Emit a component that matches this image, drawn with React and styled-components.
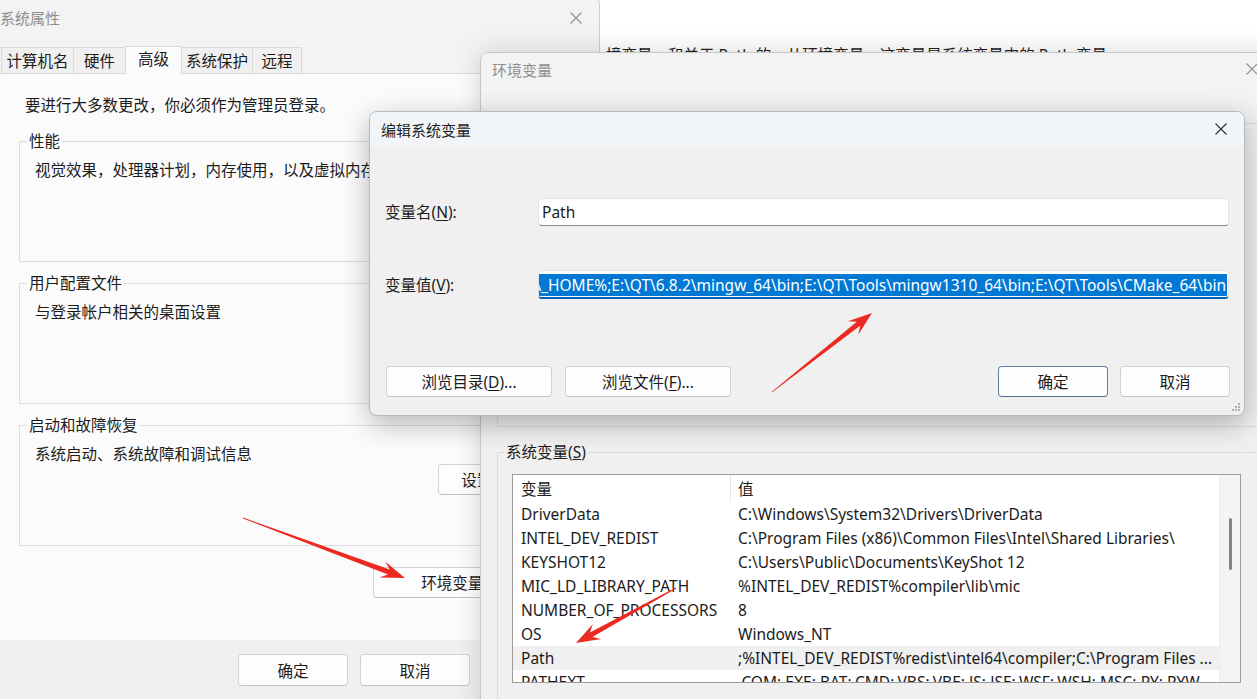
import React from 'react'
import styled, { createGlobalStyle } from 'styled-components'

const GlobalStyle = createGlobalStyle`
  html, body { margin: 0; padding: 0; }
  body {
    font-family: "Noto Sans", "Noto Sans CJK SC", sans-serif;
    font-size: 15.5px;
    color: #1b1b1b;
  }
  * { box-sizing: border-box; }
`

const Desktop = styled.div`
  position: relative;
  width: 1257px;
  height: 699px;
  overflow: hidden;
  background: #ffffff;
`

/* page behind the dialogs, top right */
const BackPage = styled.div`
  position: absolute;
  left: 600px;
  top: 0;
  width: 657px;
  height: 60px;
  background: #ffffff;
  display: flex;
  flex-direction: column;
`
const BackRule = styled.div`
  margin-top: 18px;
  height: 1px;
  background: #d6d6d6;
  box-shadow: 0 3px 0 #f0f0f0;
`
const BackText = styled.div`
  margin-top: 27px;
  padding-left: 6px;
  line-height: 20px;
  white-space: nowrap;
  color: #222;
`

/* shared window chrome */
const TitleBar = styled.div`
  flex: none;
  height: ${p => p.$h}px;
  display: flex;
  align-items: center;
  justify-content: space-between;
  padding-left: 11px;
  background: ${p => p.$bg || 'transparent'};
`
const TitleText = styled.span`
  font-size: 15px;
  color: ${p => (p.$dim ? '#8e8e8e' : '#1f1f1f')};
`
const CloseButton = styled.div`
  width: 46px;
  height: 100%;
  display: flex;
  align-items: center;
  justify-content: center;
  color: ${p => (p.$dim ? '#8e8e8e' : '#333')};
`
const CloseIcon = () => (
  <svg width="12" height="12" viewBox="0 0 12 12">
    <path d="M0.5 0.5 L11.5 11.5 M11.5 0.5 L0.5 11.5" stroke="currentColor" strokeWidth="1.1" />
  </svg>
)

const Button = styled.div`
  flex: none;
  width: ${p => p.$w}px;
  height: ${p => p.$h || 31}px;
  display: flex;
  align-items: center;
  justify-content: center;
  background: #fdfdfd;
  border: 1px solid ${p => (p.$default ? '#5b7fa9' : '#d3d3d3')};
  border-bottom-color: ${p => (p.$default ? '#4a6f9c' : '#c2c2c2')};
  border-radius: 4px;
  white-space: nowrap;
  color: #1b1b1b;
  u { text-underline-offset: 2px; }
`

/* 系统属性 */
const SysWindow = styled.section`
  position: absolute;
  left: -12px;
  top: -4px;
  width: 612px;
  height: 721px;
  background: #f3f3f3;
  border: 1px solid #cdcdcd;
  border-radius: 8px;
  display: flex;
  flex-direction: column;
  overflow: hidden;
  z-index: 1;
`
const TabStrip = styled.div`
  flex: none;
  display: flex;
  align-items: flex-end;
  height: 36px;
  padding-left: 12px;
  border-bottom: 1px solid #dadada;
`
const Tab = styled.div`
  width: ${p => p.$w}px;
  height: ${p => (p.$active ? 28 : 26)}px;
  margin-right: -1px;
  margin-bottom: ${p => (p.$active ? -1 : 0)}px;
  display: flex;
  align-items: center;
  justify-content: center;
  padding-bottom: ${p => (p.$active ? 4 : 0)}px;
  background: ${p => (p.$active ? '#fbfbfb' : '#f0f0f0')};
  border: 1px solid #dadada;
  border-bottom: none;
  position: relative;
  z-index: ${p => (p.$active ? 1 : 0)};
`
const Page = styled.div`
  flex: 1;
  background: #fbfbfb;
  padding: 21px 0 0 30px;
  display: flex;
  flex-direction: column;
`
const Notice = styled.div`
  padding-left: 6px;
  line-height: 20px;
`
const Group = styled.fieldset`
  margin: ${p => p.$mt}px 0 0 0;
  width: ${p => p.$w}px;
  height: ${p => (p.$h ? `${p.$h}px` : 'auto')};
  min-width: 0;
  border: 1px solid #dcdcdc;
  padding: ${p => p.$pad || '9px 15px 17px 15px'};
  display: flex;
  flex-direction: column;
`
const Legend = styled.legend`
  padding: 0 2px;
  margin-left: -8px;
  line-height: 20px;
`
const GroupText = styled.div`
  line-height: 20px;
`
const GroupAction = styled.div`
  margin-top: auto;
  margin-right: 19px;
  align-self: flex-end;
`
const PageActions = styled.div`
  margin-top: 21px;
  width: 562px;
  padding-right: 16px;
  display: flex;
  justify-content: flex-end;
`
const BottomBar = styled.div`
  flex: none;
  height: 76px;
  background: #f0f0f0;
  padding: 14px 0 0 249px;
  display: flex;
  gap: 12px;
`

/* 环境变量 */
const EnvWindow = styled.section`
  position: absolute;
  left: 480px;
  top: 52px;
  width: 796px;
  height: 680px;
  background: #f0f0f0;
  border: 1px solid #c8c8c8;
  border-radius: 8px;
  box-shadow: 0 0 26px rgba(0, 0, 0, 0.16);
  display: flex;
  flex-direction: column;
  overflow: hidden;
  z-index: 2;
`
const EnvBody = styled.div`
  flex: 1;
  padding: 0 16px;
  display: flex;
  flex-direction: column;
  background: linear-gradient(#f4f4f4, #f0f0f0 40px);
`
const VarList = styled.div`
  width: 729px;
  height: 209px;
  flex: none;
  border: 1px solid #9c9c9c;
  background: #ffffff;
  display: flex;
  overflow: hidden;
`
const ListTable = styled.div`
  flex: 1;
  min-width: 0;
  overflow: hidden;
`
const ListRow = styled.div`
  display: flex;
  align-items: center;
  height: ${p => (p.$head ? 27 : 24)}px;
  background: ${p => (p.$selected ? '#f0f0f0' : 'transparent')};
  white-space: nowrap;
`
const NameCell = styled.div`
  flex: none;
  width: 218px;
  height: 100%;
  display: flex;
  align-items: center;
  padding-left: 8px;
  border-right: 1px solid ${p => (p.$head ? '#e6e6e6' : 'transparent')};
  overflow: hidden;
`
const ValueCell = styled.div`
  flex: 1;
  min-width: 0;
  padding: 0 6px 0 7px;
  overflow: hidden;
  text-overflow: ellipsis;
`
const Scrollbar = styled.div`
  flex: none;
  width: 21px;
  background: #f4f4f4;
  border-left: 1px solid #ececec;
  padding: 43px 0 0 9px;
`
const Thumb = styled.div`
  width: 3px;
  height: 52px;
  border-radius: 2px;
  background: #858585;
`

/* 编辑系统变量 */
const EditDialog = styled.section`
  position: absolute;
  left: 369px;
  top: 111px;
  width: 876px;
  height: 305px;
  background: #f0f0f0;
  border: 1px solid #b9b9b9;
  border-radius: 8px;
  box-shadow: 0 8px 28px rgba(0, 0, 0, 0.28);
  display: flex;
  flex-direction: column;
  overflow: hidden;
  z-index: 3;
`
const DialogBody = styled.div`
  flex: 1;
  padding: 52px 14px 0 15px;
`
const FieldGrid = styled.div`
  display: grid;
  grid-template-columns: 153px 691px;
  grid-template-rows: 28px 29px;
  row-gap: 44px;
  align-items: center;
  u { text-underline-offset: 2px; }
`
const FieldLabel = styled.div`
  line-height: 20px;
`
const TextBox = styled.div`
  height: 100%;
  background: #ffffff;
  border: 1px solid #e3e3e3;
  border-bottom: ${p => (p.$focused ? '2px solid #005fb8' : '1px solid #878787')};
  border-radius: 4px;
  padding: ${p => (p.$focused ? '2px 1px 0' : '0 3px')};
  display: flex;
  align-items: center;
  justify-content: ${p => (p.$focused ? 'flex-end' : 'flex-start')};
  overflow: hidden;
  white-space: nowrap;
`
const Selection = styled.span`
  flex: none;
  line-height: 22px;
  height: 22px;
  padding: 0 1px 0 3px;
  background: #0078d4;
  color: #ffffff;
`
const DialogButtons = styled.div`
  margin-top: 67px;
  display: flex;
  justify-content: space-between;
  padding-left: 1px;
`
const ButtonGroup = styled.div`
  display: flex;
  gap: ${p => p.$gap}px;
`
const Grip = styled.svg`
  position: absolute;
  right: 3px;
  bottom: 3px;
`

const ArrowLayer = styled.svg`
  position: absolute;
  left: 0;
  top: 0;
  z-index: 10;
  pointer-events: none;
`

function Arrow({ from, to }) {
  const [tx, ty] = from
  const [px, py] = to
  const dx = px - tx
  const dy = py - ty
  const len = Math.hypot(dx, dy)
  const ux = dx / len
  const uy = dy / len
  const nx = -uy
  const ny = ux
  const L = 24
  const W = 8.5
  const bx = px - ux * L
  const by = py - uy * L
  const kx = px - ux * L * 0.72
  const ky = py - uy * L * 0.72
  const pt = (x, y) => `${x.toFixed(1)},${y.toFixed(1)}`
  const pts = [
    pt(tx + nx * 0.4, ty + ny * 0.4),
    pt(kx + nx * 2.6, ky + ny * 2.6),
    pt(bx + nx * W, by + ny * W),
    pt(px, py),
    pt(bx - nx * W, by - ny * W),
    pt(kx - nx * 2.6, ky - ny * 2.6),
    pt(tx - nx * 0.4, ty - ny * 0.4),
  ]
  return <polygon points={pts.join(' ')} fill="#ec2a22" />
}

const tabs = [
  { label: '计算机名', w: 73 },
  { label: '硬件', w: 53 },
  { label: '高级', w: 57, active: true },
  { label: '系统保护', w: 72 },
  { label: '远程', w: 50 },
]

const sysVars = [
  ['DriverData', 'C:\\Windows\\System32\\Drivers\\DriverData'],
  ['INTEL_DEV_REDIST', 'C:\\Program Files (x86)\\Common Files\\Intel\\Shared Libraries\\'],
  ['KEYSHOT12', 'C:\\Users\\Public\\Documents\\KeyShot 12'],
  ['MIC_LD_LIBRARY_PATH', '%INTEL_DEV_REDIST%compiler\\lib\\mic'],
  ['NUMBER_OF_PROCESSORS', '8'],
  ['OS', 'Windows_NT'],
  ['Path', ';%INTEL_DEV_REDIST%redist\\intel64\\compiler;C:\\Program Files ...', true],
  ['PATHEXT', '.COM;.EXE;.BAT;.CMD;.VBS;.VBE;.JS;.JSE;.WSF;.WSH;.MSC;.PY;.PYW'],
]

const pathValue =
  '%SystemRoot%\\system32;%SystemRoot%;%JAVA_HOME%;E:\\QT\\6.8.2\\mingw_64\\bin;E:\\QT\\Tools\\mingw1310_64\\bin;E:\\QT\\Tools\\CMake_64\\bin'

function SystemProperties() {
  return (
    <SysWindow>
      <TitleBar $h={41}>
        <TitleText $dim>系统属性</TitleText>
        <CloseButton $dim><CloseIcon /></CloseButton>
      </TitleBar>
      <TabStrip>
        {tabs.map(t => (
          <Tab key={t.label} $w={t.w} $active={t.active}>{t.label}</Tab>
        ))}
      </TabStrip>
      <Page>
        <Notice>要进行大多数更改，你必须作为管理员登录。</Notice>
        <Group $mt={16} $w={562} $h={131}>
          <Legend>性能</Legend>
          <GroupText>视觉效果，处理器计划，内存使用，以及虚拟内存</GroupText>
          <GroupAction><Button $w={108}>设置(<u>S</u>)...</Button></GroupAction>
        </Group>
        <Group $mt={11} $w={562} $h={131}>
          <Legend>用户配置文件</Legend>
          <GroupText>与登录帐户相关的桌面设置</GroupText>
          <GroupAction><Button $w={108}>设置(<u>E</u>)...</Button></GroupAction>
        </Group>
        <Group $mt={11} $w={562} $h={131}>
          <Legend>启动和故障恢复</Legend>
          <GroupText>系统启动、系统故障和调试信息</GroupText>
          <GroupAction><Button $w={108}>设置(<u>T</u>)...</Button></GroupAction>
        </Group>
        <PageActions>
          <Button $w={192}>环境变量(<u>N</u>)...</Button>
        </PageActions>
      </Page>
      <BottomBar>
        <Button $w={110} $h={32}>确定</Button>
        <Button $w={110} $h={32}>取消</Button>
        <Button $w={110} $h={32}>应用(<u>A</u>)</Button>
      </BottomBar>
    </SysWindow>
  )
}

function EnvironmentVariables() {
  return (
    <EnvWindow>
      <TitleBar $h={32} $bg="#f3f3f3">
        <TitleText $dim>环境变量</TitleText>
        <CloseButton $dim><CloseIcon /></CloseButton>
      </TitleBar>
      <EnvBody>
        <Group $mt={28} $w={762} $h={314}>
          <Legend>用户变量(U)</Legend>
        </Group>
        <Group $mt={15} $w={762} $pad="12px 14px 20px 14px">
          <Legend>系统变量(<u>S</u>)</Legend>
          <VarList>
            <ListTable>
              <ListRow $head>
                <NameCell $head>变量</NameCell>
                <ValueCell>值</ValueCell>
              </ListRow>
              {sysVars.map(([name, value, selected]) => (
                <ListRow key={name} $selected={selected}>
                  <NameCell>{name}</NameCell>
                  <ValueCell>{value}</ValueCell>
                </ListRow>
              ))}
            </ListTable>
            <Scrollbar><Thumb /></Scrollbar>
          </VarList>
        </Group>
      </EnvBody>
    </EnvWindow>
  )
}

function EditVariable() {
  return (
    <EditDialog>
      <TitleBar $h={34} $bg="#f2f5f8">
        <TitleText>编辑系统变量</TitleText>
        <CloseButton><CloseIcon /></CloseButton>
      </TitleBar>
      <DialogBody>
        <FieldGrid>
          <FieldLabel>变量名(<u>N</u>):</FieldLabel>
          <TextBox>Path</TextBox>
          <FieldLabel>变量值(<u>V</u>):</FieldLabel>
          <TextBox $focused><Selection>{pathValue}</Selection></TextBox>
        </FieldGrid>
        <DialogButtons>
          <ButtonGroup $gap={13}>
            <Button $w={166}>浏览目录(<u>D</u>)...</Button>
            <Button $w={166}>浏览文件(<u>F</u>)...</Button>
          </ButtonGroup>
          <ButtonGroup $gap={12}>
            <Button $w={110} $default>确定</Button>
            <Button $w={110}>取消</Button>
          </ButtonGroup>
        </DialogButtons>
      </DialogBody>
      <Grip width="10" height="10" viewBox="0 0 10 10">
        {[[8, 2], [5, 5], [8, 5], [2, 8], [5, 8], [8, 8]].map(([x, y]) => (
          <rect key={`${x}-${y}`} x={x - 1} y={y - 1} width="2" height="2" fill="#b0b0b0" />
        ))}
      </Grip>
    </EditDialog>
  )
}

export default function App() {
  return (
    <>
      <GlobalStyle />
      <Desktop>
        <BackPage>
          <BackRule />
          <BackText>境变量，和关于 Path 的，从环境变量，这变量是系统变量中的 Path 变量</BackText>
        </BackPage>
        <SystemProperties />
        <EnvironmentVariables />
        <EditVariable />
        <ArrowLayer width="1257" height="699" viewBox="0 0 1257 699">
          <Arrow from={[243, 518]} to={[405, 578]} />
          <Arrow from={[772, 392]} to={[872, 313]} />
          <Arrow from={[676, 588]} to={[576, 643]} />
        </ArrowLayer>
      </Desktop>
    </>
  )
}
